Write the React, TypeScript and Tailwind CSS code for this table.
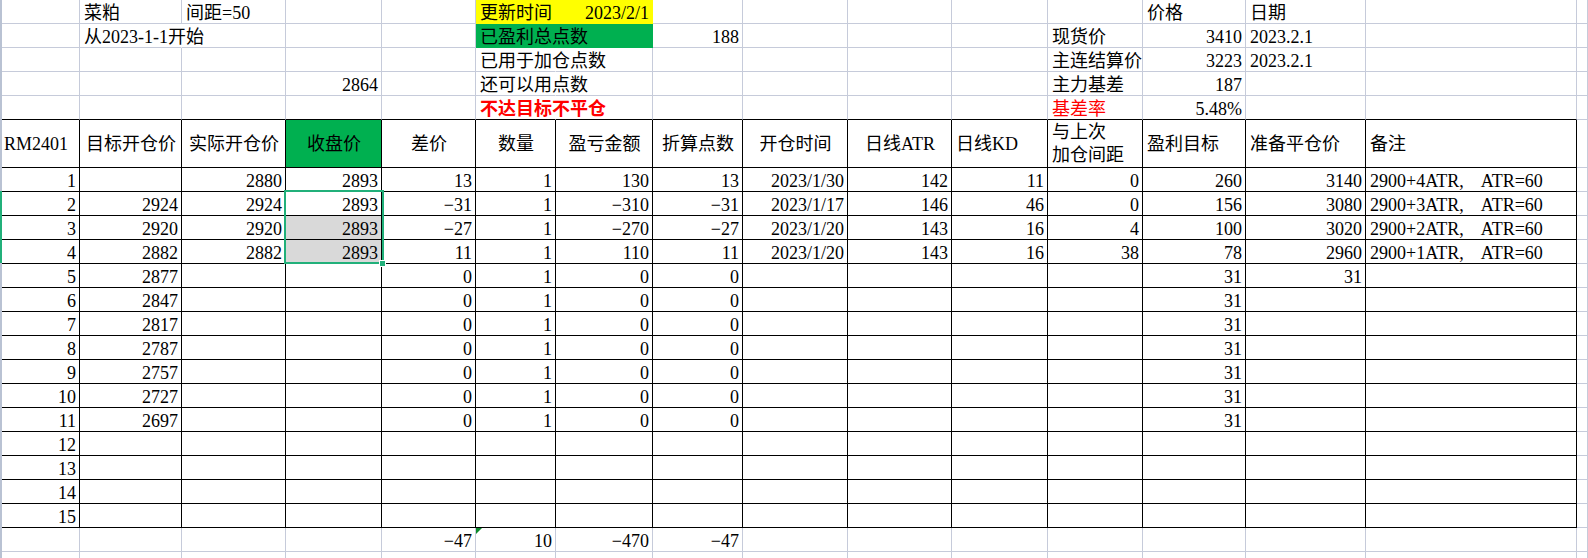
import React from 'react';
import clsx from 'clsx';

type Align = 'l' | 'r' | 'c';

interface CellDef {
  t?: string;
  a?: Align;
  red?: boolean;
  bold?: boolean;
  fill?: 'y' | 'g' | 'gray';
  hideR?: boolean;
}

const M = '\u2212';

// 16 columns: A..O plus the sliver of P
const blank = (): CellDef[] => Array.from({ length: 16 }, () => ({}));

const row = (vals: Record<number, CellDef>): CellDef[] => {
  const r = blank();
  Object.entries(vals).forEach(([k, v]) => {
    r[Number(k)] = v;
  });
  return r;
};

const R = (t: string): CellDef => ({ t, a: 'r' });
const L = (t: string): CellDef => ({ t, a: 'l' });
const C = (t: string): CellDef => ({ t, a: 'c' });

const remark = (n: number) => `2900+${n}ATR,    ATR=60`;

const rows: CellDef[][] = [
  row({ 1: L('菜粕'), 2: L('间距=50'), 5: { t: '更新时间', a: 'l', fill: 'y' }, 6: { t: '2023/2/1', a: 'r', fill: 'y' }, 12: L('价格'), 13: L('日期') }),
  row({ 1: { t: '从2023-1-1开始', a: 'l', hideR: true }, 5: { t: '已盈利总点数', a: 'l', fill: 'g' }, 6: { fill: 'g' }, 7: R('188'), 11: L('现货价'), 12: R('3410'), 13: L('2023.2.1') }),
  row({ 5: { t: '已用于加仓点数', a: 'l', hideR: true }, 11: L('主连结算价'), 12: R('3223'), 13: L('2023.2.1') }),
  row({ 3: R('2864'), 5: { t: '还可以用点数', a: 'l', hideR: true }, 11: L('主力基差'), 12: R('187') }),
  row({ 5: { t: '不达目标不平仓', a: 'l', red: true, bold: true, hideR: true }, 11: { t: '基差率', a: 'l', red: true }, 12: R('5.48%') }),
  row({
    0: L('RM2401'), 1: C('目标开仓价'), 2: C('实际开仓价'), 3: { t: '收盘价', a: 'c', fill: 'g' }, 4: C('差价'), 5: C('数量'),
    6: C('盈亏金额'), 7: C('折算点数'), 8: C('开仓时间'), 9: C('日线ATR'), 10: L('日线KD'), 11: L('与上次\n加仓间距'),
    12: L('盈利目标'), 13: L('准备平仓价'), 14: L('备注'),
  }),
  row({ 0: R('1'), 2: R('2880'), 3: R('2893'), 4: R('13'), 5: R('1'), 6: R('130'), 7: R('13'), 8: R('2023/1/30'), 9: R('142'), 10: R('11'), 11: R('0'), 12: R('260'), 13: R('3140'), 14: L(remark(4)) }),
  row({ 0: R('2'), 1: R('2924'), 2: R('2924'), 3: R('2893'), 4: R(`${M}31`), 5: R('1'), 6: R(`${M}310`), 7: R(`${M}31`), 8: R('2023/1/17'), 9: R('146'), 10: R('46'), 11: R('0'), 12: R('156'), 13: R('3080'), 14: L(remark(3)) }),
  row({ 0: R('3'), 1: R('2920'), 2: R('2920'), 3: { t: '2893', a: 'r', fill: 'gray' }, 4: R(`${M}27`), 5: R('1'), 6: R(`${M}270`), 7: R(`${M}27`), 8: R('2023/1/20'), 9: R('143'), 10: R('16'), 11: R('4'), 12: R('100'), 13: R('3020'), 14: L(remark(2)) }),
  row({ 0: R('4'), 1: R('2882'), 2: R('2882'), 3: { t: '2893', a: 'r', fill: 'gray' }, 4: R('11'), 5: R('1'), 6: R('110'), 7: R('11'), 8: R('2023/1/20'), 9: R('143'), 10: R('16'), 11: R('38'), 12: R('78'), 13: R('2960'), 14: L(remark(1)) }),
  row({ 0: R('5'), 1: R('2877'), 4: R('0'), 5: R('1'), 6: R('0'), 7: R('0'), 12: R('31'), 13: R('31') }),
  ...[2847, 2817, 2787, 2757, 2727, 2697].map((p, i) =>
    row({ 0: R(String(i + 6)), 1: R(String(p)), 4: R('0'), 5: R('1'), 6: R('0'), 7: R('0'), 12: R('31') })
  ),
  ...[12, 13, 14, 15].map((n) => row({ 0: R(String(n)) })),
  row({ 4: R(`${M}47`), 5: R('10'), 6: R(`${M}470`), 7: R(`${M}47`) }),
  blank(),
];

function Cell({ c, r, i }: { c: CellDef; r: number; i: number }) {
  const inCols = i <= 14;
  const blackR = inCols && r >= 5 && r <= 20;
  const blackB = inCols && r >= 4 && r <= 20;
  const header = r === 5;

  const rightCls = blackR
    ? 'border-r-black'
    : c.fill === 'y'
    ? 'border-r-[#ffff00]'
    : c.fill === 'g'
    ? 'border-r-[#00b050]'
    : c.hideR
    ? 'border-r-white'
    : 'border-r-[#c6cbda]';

  const bottomCls = blackB
    ? 'border-b-black'
    : c.fill === 'y'
    ? 'border-b-[#ffff00]'
    : c.fill === 'g'
    ? 'border-b-[#00b050]'
    : 'border-b-[#c6cbda]';

  return (
    <div
      className={clsx(
        'flex border-r border-b pl-[4px] pr-[3px] whitespace-nowrap overflow-visible min-w-0',
        rightCls,
        bottomCls,
        header ? 'items-center' : 'items-end',
        c.a === 'r' && 'justify-end',
        c.a === 'c' && 'justify-center',
        c.fill === 'y' && 'bg-[#ffff00]',
        c.fill === 'g' && 'bg-[#00b050]',
        c.fill === 'gray' && 'bg-[#d9d9d9]'
      )}
    >
      {c.t && (
        <span
          className={clsx(
            'relative whitespace-pre',
            c.t.includes('\n') ? 'leading-[23px]' : 'leading-[20px]',
            c.red ? 'text-[#ff0000]' : 'text-black',
            c.bold && 'font-bold'
          )}
        >
          {c.t}
        </span>
      )}
    </div>
  );
}

export default function App() {
  return (
    <div className="relative w-[1588px] h-[558px] overflow-hidden bg-white font-['Liberation_Serif','Noto_Sans_CJK_SC',serif] text-[18px]">
      <div className="grid grid-cols-[80px_102px_104px_96px_94px_80px_97px_90px_105px_104px_96px_95px_103px_120px_211px_11px] grid-rows-[repeat(5,24px)_48px_repeat(17,24px)]">
        {rows.map((cells, r) =>
          cells.map((c, i) => <Cell key={`${r}-${i}`} c={c} r={r} i={i} />)
        )}
      </div>

      {/* window edge + selected row marker */}
      <div className="absolute left-0 top-0 w-[2px] h-full bg-[#b9c2d3]" />
      <div className="absolute left-0 top-[191px] w-[2px] h-[72px] bg-[#21b07a]" />

      {/* selection D2:D4 */}
      <div className="absolute left-[284px] top-[190px] w-[100px] h-[74px] border-2 border-[#21b07a]" />
      <div className="absolute left-[379px] top-[260px] w-[7px] h-[7px] bg-[#21b07a] border border-white" />

      {/* error indicator */}
      <div className="absolute left-[476px] top-[528px] w-0 h-0 border-t-[6px] border-t-[#0a8a2a] border-r-[6px] border-r-transparent" />
    </div>
  );
}
